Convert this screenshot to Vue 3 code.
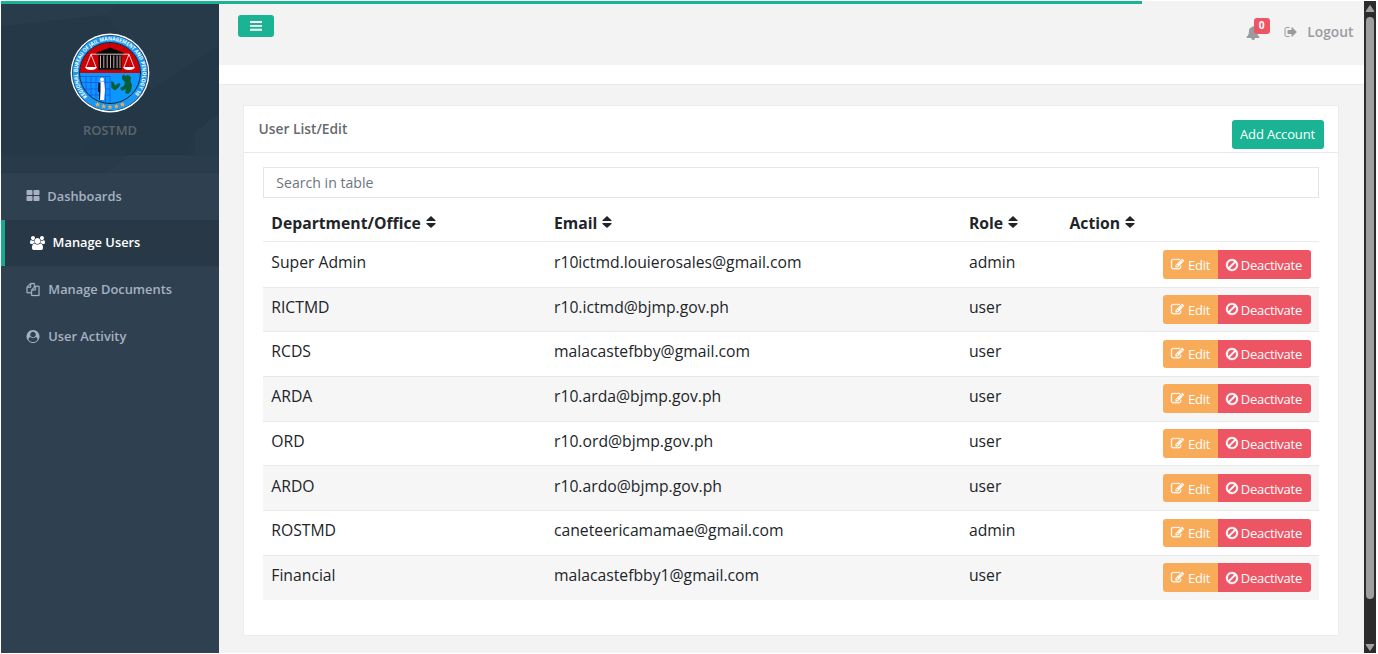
<script setup>
const icons = {
  large: { box: '0 0 1792 1792', d: 'M832 1024v384q0 52-38 90t-90 38h-512q-52 0-90-38t-38-90v-384q0-52 38-90t90-38h512q52 0 90 38t38 90zm0-768v384q0 52-38 90t-90 38h-512q-52 0-90-38t-38-90v-384q0-52 38-90t90-38h512q52 0 90 38t38 90zm896 768v384q0 52-38 90t-90 38h-512q-52 0-90-38t-38-90v-384q0-52 38-90t90-38h512q52 0 90 38t38 90zm0-768v384q0 52-38 90t-90 38h-512q-52 0-90-38t-38-90v-384q0-52 38-90t90-38h512q52 0 90 38t38 90z' },
  users: { box: '0 0 1920 1792', d: 'M593 896q-162 5-265 128h-134q-82 0-138-40.5t-56-118.5q0-353 124-353 6 0 43.5 21t97.5 42.5 119 21.5q67 0 133-23-5 37-5 66 0 139 81 256zm1071 637q0 120-73 189.5t-194 69.5h-874q-121 0-194-69.5t-73-189.5q0-53 3.5-103.5t14-109 26.5-108.5 43-97.5 62-81 85.5-53.5 111.5-20q10 0 43 21.5t73 48 107 48 135 21.5 135-21.5 107-48 73-48 43-21.5q61 0 111.5 20t85.5 53.5 62 81 43 97.5 26.5 108.5 14 109 3.5 103.5zm-1024-1277q0 106-75 181t-181 75-181-75-75-181 75-181 181-75 181 75 75 181zm704 384q0 159-112.5 271.5t-271.5 112.5-271.5-112.5-112.5-271.5 112.5-271.5 271.5-112.5 271.5 112.5 112.5 271.5zm576 225q0 78-56 118.5t-138 40.5h-134q-103-123-265-128 81-117 81-256 0-29-5-66 66 23 133 23 59 0 119-21.5t97.5-42.5 43.5-21q124 0 124 353zm-128-609q0 106-75 181t-181 75-181-75-75-181 75-181 181-75 181 75 75 181z' },
  files: { box: '0 0 1792 1792', d: 'M1696 384q40 0 68 28t28 68v1216q0 40-28 68t-68 28h-960q-40 0-68-28t-28-68v-288h-544q-40 0-68-28t-28-68v-672q0-40 20-88t48-76l408-408q28-28 76-48t88-20h416q40 0 68 28t28 68v328q68-40 128-40h416zm-544 213l-299 299h299v-299zm-640-384l-299 299h299v-299zm196 647l316-316v-416h-384v416q0 40-28 68t-68 28h-416v640h512v-256q0-40 20-88t48-76zm956 804v-1152h-384v416q0 40-28 68t-68 28h-416v640h896z' },
  circle: { box: '0 0 1792 1792', d: 'M1523 1339q-22-155-87.5-257.5t-184.5-118.5q-67 74-159.5 115.5t-195.5 41.5-195.5-41.5-159.5-115.5q-119 16-184.5 118.5t-87.5 257.5q106 150 271 237.5t356 87.5 356-87.5 271-237.5zm-243-699q0-159-112.5-271.5t-271.5-112.5-271.5 112.5-112.5 271.5 112.5 271.5 271.5 112.5 271.5-112.5 112.5-271.5zm512 256q0 182-71 347.5t-190.5 286-285.5 191.5-349 71-349-71-285.5-191.5-190.5-286-71-347.5 71-348 191-286 286-191 348-71 348 71 286 191 191 286 71 348z' },
}
const nav = [
  { label: 'Dashboards', icon: 'large' },
  { label: 'Manage Users', icon: 'users', active: true },
  { label: 'Manage Documents', icon: 'files' },
  { label: 'User Activity', icon: 'circle' },
]
const columns = ['Department/Office', 'Email', 'Role', 'Action']
const users = [
  ['Super Admin', 'r10ictmd.louierosales@gmail.com', 'admin'],
  ['RICTMD', 'r10.ictmd@bjmp.gov.ph', 'user'],
  ['RCDS', 'malacastefbby@gmail.com', 'user'],
  ['ARDA', 'r10.arda@bjmp.gov.ph', 'user'],
  ['ORD', 'r10.ord@bjmp.gov.ph', 'user'],
  ['ARDO', 'r10.ardo@bjmp.gov.ph', 'user'],
  ['ROSTMD', 'caneteericamamae@gmail.com', 'admin'],
  ['Financial', 'malacastefbby1@gmail.com', 'user'],
]
const stars = [[-12.4, 31.4], [-6.4, 33.3], [0, 34], [6.4, 33.3], [12.4, 31.4]]
</script>

<template>
  <div class="window">
    <div class="progress"></div>
    <aside class="sidebar">
      <div class="profile">
        <svg class="facets" viewBox="0 0 217 170" preserveAspectRatio="none">
          <path d="M0 0H120L105 14L0 25Z" fill="#283c4b" />
          <path d="M120 0H217V45L150 88L105 14Z" fill="#263a49" />
          <path d="M150 88L217 45V118L193 130Z" fill="#243746" />
          <path d="M110 108L150 88L193 130L185 153L80 153Z" fill="#243746" />
          <path d="M193 130L217 112V153H193Z" fill="#273b4a" />
          <path d="M0 153H217V170H0Z" fill="#273b4a" />
          <path d="M105 170L128 153H217V170Z" fill="#293d4c" />
        </svg>
        <svg class="seal" viewBox="-40 -40 80 80">
          <defs>
            <path id="seal-arc" d="M-22.5 23.3A32.4 32.4 0 1 1 22.5 23.3" />
            <clipPath id="seal-clip"><circle r="30.3" /></clipPath>
          </defs>
          <circle r="39.4" fill="#fff" />
          <circle r="38" fill="#0d1b2b" />
          <circle r="37.5" fill="#1b97f0" />
          <g clip-path="url(#seal-clip)">
            <path d="M-31-31H31V0H-31Z" fill="#cf0004" />
            <path d="M-31 0H31V31H-31Z" fill="#0a98ff" />
            <path d="M-31 3.5H0M-31 9.5H0M-31 16H0M-31 22H0M-24 3.5V29M-19 3.5V29M-14 3.5V29M-9 3.5V29M-4.5 3.5V29M0 3.5V30" stroke="#2350e8" stroke-width=".8" />
          </g>
          <circle r="30.5" fill="none" stroke="#10283c" stroke-width="1" />
          <path d="M-14-20L0-25.5L14-20V-18H-14Z" fill="#080808" />
          <path d="M-11.5-18H11.5V-4H-11.5Z" fill="#080808" />
          <path d="M-9.5-17.5V-5M-6.2-17.5V-5M-2.8-17.5V-5M.5-17.5V-5M3.8-17.5V-5M7.1-17.5V-5M10-17.5V-5" stroke="#c2aaa9" stroke-width="1" />
          <path d="M-12-3.6H12" stroke="#222" stroke-width="1.4" />
          <path d="M-19-18.8H19M-19-18.8L-24-6M-19-18.8L-14-6M19-18.8L14-6M19-18.8L24-6" stroke="#fff" stroke-width=".8" fill="none" />
          <path d="M-25-6H-13Q-14-3-19-3T-25-6ZM13-6H25Q24-3 19-3T13-6Z" fill="#fff" />
          <circle cx="-8" cy="6.4" r="1.9" fill="#fff" />
          <path d="M-10.5 8.5H-6L-5 17L-6 27H-10.5Z" fill="#fff" />
          <path d="M-11.8 10L-9.5 9V18L-10 27H-11V19H-12Z" fill="#101a33" />
          <path d="M1 8L3.5 9L5 12.5L9 10L10.5 11L9 14L5 17.5L1.5 15Z M12 3L14 1.5L15 3L18 2L21 4L20.5 8L22 12L21 18L18 21L15 20L16 16L12 18L10 15L14 13L15 9L12 6Z" fill="#075f35" />
          <text class="seal-text"><textPath href="#seal-arc" startOffset="0" textLength="150" lengthAdjust="spacingAndGlyphs">REGIONAL BUREAU OF JAIL MANAGEMENT AND PENOLOGY 10</textPath></text>
          <path v-for="(s, i) in stars" :key="i" :transform="`translate(${s[0]} ${s[1]})`" d="M0-2.7L.8-.8L2.7-.7L1.2.5L1.8 2.4L0 1.3L-1.8 2.4L-1.2.5L-2.7-.7L-.8-.8Z" fill="#e9ad4c" />
        </svg>
        <span class="profile-name">ROSTMD</span>
      </div>
      <nav>
        <a v-for="item in nav" :key="item.label" class="nav-item" :class="[item.icon, { active: item.active }]">
          <svg class="nav-icon" :viewBox="icons[item.icon].box"><path :d="icons[item.icon].d" fill="currentColor" /></svg>
          <span>{{ item.label }}</span>
        </a>
      </nav>
    </aside>

    <main class="page">
      <header class="topbar">
        <button class="menu" aria-label="Menu">
          <svg viewBox="0 0 12 10"><path d="M0 1H12M0 4.9H12M0 8.8H12" stroke="#fff" stroke-width="1.9" /></svg>
        </button>
        <div class="top-links">
          <span class="bell">
            <svg viewBox="0 0 1792 1792"><path fill="currentColor" d="M912 1696q0-16-16-16-59 0-101.5-42.5t-42.5-101.5q0-16-16-16t-16 16q0 73 51.5 124.5t124.5 51.5q16 0 16-16zm816-288q0 52-38 90t-90 38h-448q0 106-75 181t-181 75-181-75-75-181h-448q-52 0-90-38t-38-90q50-42 91-88t85-119.5 74.5-158.5 50-206 19.5-260q0-152 117-282.5t307-158.5q-8-19-8-39 0-40 28-68t68-28 68 28 28 68q0 20-8 39 190 28 307 158.5t117 282.5q0 139 19.5 260t50 206 74.5 158.5 85 119.5 91 88z" /></svg>
            <b class="badge">0</b>
          </span>
          <a class="logout">
            <svg viewBox="0 0 1664 1792"><path fill="currentColor" d="M704 1440q0 4 1 20t.5 26.5-3 23.5-10 19.5-20.5 6.5h-320q-119 0-203.5-84.5t-84.5-203.5v-704q0-119 84.5-203.5t203.5-84.5h320q13 0 22.5 9.5t9.5 22.5q0 4 1 20t.5 26.5-3 23.5-10 19.5-20.5 6.5h-320q-66 0-113 47t-47 113v704q0 66 47 113t113 47h312l11.5 1 11.5 3 8 5.5 7 9 2 13.5zm928-544q0 26-19 45l-544 544q-19 19-45 19t-45-19-19-45v-288h-448q-26 0-45-19t-19-45v-384q0-26 19-45t45-19h448v-288q0-26 19-45t45-19 45 19l544 544q19 19 19 45z" /></svg>
            <span>Logout</span>
          </a>
        </div>
      </header>
      <div class="heading-strip"></div>
      <section class="card">
        <header class="card-head">
          <h5>User List/Edit</h5>
          <button class="add">Add Account</button>
        </header>
        <div class="card-body">
          <input class="search" type="text" placeholder="Search in table" />
          <div class="row head">
            <div v-for="c in columns" :key="c" class="cell">
              <span>{{ c }}</span>
              <svg class="sort" viewBox="0 0 10 12"><path d="M5 0L9.5 4.3Q10 5.1 9.2 5.1H.8Q0 5.1 .5 4.3ZM5 12L9.5 7.9Q10 7.1 9.2 7.1H.8Q0 7.1 .5 7.9Z" fill="currentColor" /></svg>
            </div>
          </div>
          <div v-for="u in users" :key="u[0]" class="row data">
            <div v-for="(v, i) in u" :key="i" class="cell">{{ v }}</div>
            <div class="cell"></div>
            <div class="actions">
              <button class="btn edit">
                <svg viewBox="0 0 1792 1792"><path fill="currentColor" d="M888 1184l116-116-152-152-116 116v56h96v96h56zm440-720q-16-16-33 1l-350 350q-17 17-1 33t33-1l350-350q17-17 1-33zm80 594v190q0 119-84.5 203.5t-203.5 84.5h-832q-119 0-203.5-84.5t-84.5-203.5v-832q0-119 84.5-203.5t203.5-84.5h832q63 0 117 25 15 7 18 23 3 17-9 29l-49 49q-14 14-32 8-23-6-45-6h-832q-66 0-113 47t-47 113v832q0 66 47 113t113 47h832q66 0 113-47t47-113v-126q0-13 9-22l64-64q15-15 35-7t20 29zm-96-738l288 288-672 672h-288v-288zm444 132l-92 92-288-288 92-92q28-28 68-28t68 28l152 152q28 28 28 68t-28 68z" /></svg>
                <span>Edit</span>
              </button>
              <button class="btn deactivate">
                <svg viewBox="128 0 1536 1792"><path fill="currentColor" d="M1440 893q0-161-87-295l-754 753q137 89 297 89 111 0 211.5-43.5t173.5-116.5 116-174.5 43-212.5zm-999 299l755-754q-135-91-300-91-148 0-273 73t-198 199-73 274q0 162 89 299zm1223-299q0 157-61 300t-163.5 246-245 164-298.5 61-298.5-61-245-164-163.5-246-61-300 61-299.5 163.5-245.5 245-164 298.5-61 298.5 61 245 164 163.5 245.5 61 299.5z" /></svg>
                <span>Deactivate</span>
              </button>
            </div>
          </div>
        </div>
      </section>
    </main>

    <div class="scrollbar">
      <svg viewBox="0 0 10 7"><path d="M5 .5L9 6.5H1Z" fill="#a0a0a0" stroke="#a0a0a0" stroke-linejoin="round" /></svg>
      <div class="thumb"></div>
      <svg viewBox="0 0 10 7"><path d="M5 6.5L9 .5H1Z" fill="#a0a0a0" stroke="#a0a0a0" stroke-linejoin="round" /></svg>
    </div>
  </div>
</template>

<style>
html, body { background: #fff; overflow: hidden; }
</style>

<style scoped>
* { box-sizing: border-box; }
.window {
  position: relative;
  display: flex;
  width: 1378px;
  height: 654px;
  padding: 1.4px 2px 1.5px 1.3px;
  background: #fff;
  font-family: "Open Sans", "Noto Sans", sans-serif;
  color: #676a6c;
}
button { border: 0; margin: 0; font-family: inherit; color: #fff; }
svg { display: block; flex: none; }
.progress { position: absolute; left: 1px; top: 1px; width: 1141px; height: 2.6px; background: #1ab394; z-index: 2; }

.sidebar { width: 217.3px; background: #2f4050; flex: none; }
.profile { position: relative; height: 171.5px; background: #253847; display: flex; flex-direction: column; align-items: center; padding-top: 31.6px; }
.facets { position: absolute; inset: 0; width: 100%; height: 100%; }
.seal { position: relative; width: 80px; height: 80px; }
.seal-text { font: bold 5.4px "Open Sans", sans-serif; fill: #fff; }
.profile-name { position: relative; margin-top: 7.9px; font-size: 12.9px; line-height: 18px; font-weight: 600; color: #5d666d; }
.nav-item { display: flex; align-items: center; height: 46.7px; padding-left: 24.5px; font-size: 12.85px; font-weight: 600; color: #a7b1c2; }
.nav-item span { margin-left: 8.5px; }
.nav-icon { width: 14px; height: 13px; overflow: visible; }
.files .nav-icon path { stroke: currentColor; stroke-width: 40px; }
.large .nav-icon { width: 14px; height: 14px; }
.large span { margin-left: 7.5px; }
.active { background: #293846; border-left: 4px solid #19aa8d; color: #fff; }
.users .nav-icon { width: 15px; height: 14px; }
.users span { margin-left: 7.8px; }
.users span, .files span { margin-top: -1px; }

.page { flex: 1; min-width: 0; background: #f3f3f4; }
.topbar { height: 63.6px; display: flex; justify-content: space-between; padding: 13.5px 10px 0 19.4px; }
.menu { width: 36px; height: 22px; border-radius: 3px; background: #1ab394; display: flex; align-items: center; justify-content: center; padding: 0; }
.menu svg { width: 12px; height: 10px; }
.top-links { display: flex; align-items: center; height: 34px; color: #999c9e; }
.bell { position: relative; width: 14px; }
.bell svg { width: 14px; height: 14px; margin-top: 2px; }
.badge { position: absolute; left: 8px; top: -6px; width: 16px; height: 16px; border-radius: 3px; background: #ed5565; color: #fff; font-size: 10.2px; line-height: 15px; font-weight: 700; text-align: center; }
.logout { display: flex; align-items: center; margin-left: 24.5px; font-size: 13.8px; font-weight: 600; }
.logout svg { width: 13px; height: 14px; }
.logout span { margin: 0 0 0 10px; }
.heading-strip { height: 20px; background: #fff; border-bottom: 1px solid #e7eaec; }

.card { margin: 20px 25px 0 24.7px; height: 530.8px; background: #fff; border: 1px solid #ececee; }
.card-head { height: 47px; border-bottom: 1px solid #e7eaec; display: flex; justify-content: space-between; padding: 13.4px 14px 0 14.2px; }
h5 { margin: 0; font-size: 13.8px; line-height: 19px; font-weight: 600; }
.add { width: 92px; height: 29px; margin-top: .3px; border-radius: 3px; background: #1ab394; padding: 0; font-size: 13px; letter-spacing: -.15px; }
.card-body { padding: 14px 19px; }
.search { display: block; width: 100%; height: 31px; border: 1px solid #e5e6e7; padding: 0 12px; font: 14.1px "Open Sans", sans-serif; background: #fff; outline: 0; }
.search::placeholder { color: #6c757d; opacity: 1; }
.row { display: grid; grid-template-columns: 282.7px 415px 100.5px 93.8px 1fr; font-size: 15.72px; color: #212529; }
.cell { padding-left: 8px; white-space: nowrap; }
.head { height: 43.8px; border-bottom: 1px solid #ebebeb; font-weight: 700; }
.head .cell { display: flex; align-items: center; padding-top: 7px; }
.sort { width: 10px; height: 12px; margin: -2px 0 0 5px; }
.data { height: 44.72px; border-top: 1px solid #e7eaec; line-height: 22px; }
.data .cell { padding-top: 8.2px; }
.data:nth-child(even) { background: #f6f6f6; }
.data:nth-child(3) { border-top-color: #fff; }
.actions { display: flex; padding: 7.5px 0 0 8px; }
.btn { display: flex; align-items: center; height: 28.5px; padding: 0 0 0 8px; font-size: 13px; letter-spacing: -.25px; line-height: 20px; }
.btn svg { width: 13px; height: 13px; overflow: visible; }
.btn path { stroke: currentColor; stroke-width: 40px; }
.btn span { margin: .8px 0 0 3.7px; }
.edit { width: 55px; background: #f8ac59; border-radius: 3px 0 0 3px; }
.deactivate { width: 93px; background: #ed5565; border-radius: 0 3px 3px 0; }
.deactivate svg { width: 12px; height: 14px; }
.deactivate span { margin-left: 2.5px; }

.scrollbar { width: 12.5px; flex: none; background: #2c2c2c; display: flex; flex-direction: column; align-items: center; padding: 4px 0 1.5px; }
.scrollbar svg { width: 10px; height: 7px; }
.thumb { width: 8px; height: 582px; margin: 5px 0 auto; border-radius: 4px; background: #9f9f9f; }
</style>
